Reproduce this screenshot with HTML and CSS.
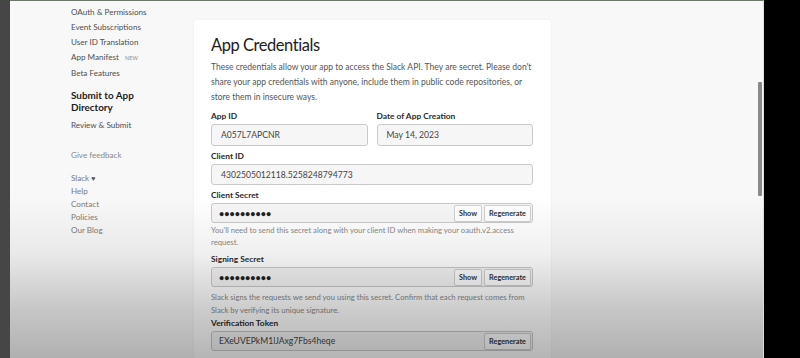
FILE: index.html
```html
<!DOCTYPE html>
<html>
<head>
<meta charset="utf-8">
<link rel="stylesheet" href="styles.css">
</head>
<body>
<div class="frame">
  <div class="strip"></div>
  <div class="page">
    <nav class="sidebar">
      <a class="nav">OAuth &amp; Permissions</a>
      <a class="nav">Event Subscriptions</a>
      <a class="nav">User ID Translation</a>
      <a class="nav">App Manifest <span class="new">NEW</span></a>
      <a class="nav">Beta Features</a>
      <div class="section">Submit to App Directory</div>
      <a class="nav">Review &amp; Submit</a>
      <a class="feedback">Give feedback</a>
      <div class="footer">
        <a class="foot">Slack <span class="heart">&#9829;</span></a>
        <a class="foot">Help</a>
        <a class="foot">Contact</a>
        <a class="foot">Policies</a>
        <a class="foot">Our Blog</a>
      </div>
    </nav>
    <main class="card">
      <h1 class="title">App Credentials</h1>
      <p class="desc">These credentials allow your app to access the Slack API. They are secret. Please don't share your app credentials with anyone, include them in public code repositories, or store them in insecure ways.</p>
      <div class="row">
        <div class="field">
          <label class="label">App ID</label>
          <div class="input tall">A057L7APCNR</div>
        </div>
        <div class="field">
          <label class="label">Date of App Creation</label>
          <div class="input tall">May 14, 2023</div>
        </div>
      </div>
      <div class="field f-client">
        <label class="label">Client ID</label>
        <div class="input mid">4302505012118.5258248794773</div>
      </div>
      <div class="field f-secret">
        <label class="label">Client Secret</label>
        <div class="input secret"><span class="dots">&#8226;&#8226;&#8226;&#8226;&#8226;&#8226;&#8226;&#8226;&#8226;&#8226;</span><span class="btns"><button class="btn">Show</button><button class="btn">Regenerate</button></span></div>
      </div>
      <p class="help h1">You'll need to send this secret along with your client ID when making your oauth.v2.access request.</p>
      <div class="field f-signing">
        <label class="label">Signing Secret</label>
        <div class="input secret"><span class="dots">&#8226;&#8226;&#8226;&#8226;&#8226;&#8226;&#8226;&#8226;&#8226;&#8226;</span><span class="btns"><button class="btn">Show</button><button class="btn">Regenerate</button></span></div>
      </div>
      <p class="help h2">Slack signs the requests we send you using this secret. Confirm that each request comes from Slack by verifying its unique signature.</p>
      <div class="field f-token">
        <label class="label">Verification Token</label>
        <div class="input secret"><span>EXeUVEPkM1lJAxg7Fbs4heqe</span><span class="btns"><button class="btn">Regenerate</button></span></div>
      </div>
      <p class="help h3">This deprecated Verification Token can still be used to verify that requests come from Slack, but</p>
    </main>
    <div class="scrollbar"></div>
    <div class="shade"></div>
  </div>
  <div class="black"></div>
</div>
</body>
</html>
```

FILE: styles.css
```css
* { box-sizing: border-box; }
html, body { margin: 0; padding: 0; }
body {
  width: 800px;
  height: 358px;
  overflow: hidden;
  font-family: Lato, "Noto Sans", sans-serif;
  background: #000;
}
.frame {
  display: flex;
  width: 800px;
  height: 358px;
}
.strip {
  width: 10px;
  background: #464646;
  flex: none;
}
.page {
  position: relative;
  width: 754px;
  flex: none;
  background: #f8f8f8;
  border-top: 1px solid #6c786a;
  border-right: 1px solid #dcdcdc;
  display: flex;
  align-items: flex-start;
  padding-left: 61px;
  overflow: hidden;
}
.black {
  flex: 1;
  background: #000;
}
.sidebar {
  width: 123px;
  flex: none;
  display: flex;
  flex-direction: column;
  padding-top: 4px;
}
.nav {
  font-size: 8.1px;
  line-height: 15px;
  color: #4f4f4f;
}
.new {
  font-size: 5.3px;
  color: #888;
  margin-left: 4px;
  letter-spacing: 0.2px;
}
.section {
  font-size: 9.9px;
  font-weight: 700;
  color: #1d1c1d;
  line-height: 12px;
  margin-top: 8px;
  margin-bottom: 5px;
  width: 80px;
}
.feedback {
  font-size: 8.1px;
  line-height: 15px;
  color: #8a8a8a;
  margin-top: 15px;
}
.footer {
  display: flex;
  flex-direction: column;
  margin-top: 9px;
}
.foot {
  font-size: 8.1px;
  line-height: 13px;
  color: #7a7a7a;
}
.heart { font-size: 7px; color: #555; }
.card {
  width: 357px;
  flex: none;
  margin-top: 19px;
  background: #fff;
  box-shadow: 0 0 2px rgba(0,0,0,0.08);
  border-radius: 3px;
  padding: 14px 18px 20px 17px;
  min-height: 400px;
}
.title {
  margin: 0;
  font-size: 16.5px;
  letter-spacing: -0.45px;
  line-height: 22px;
  font-weight: 400;
  color: #1d1c1d;
}
.desc {
  margin: 4px -3px 0 0;
  font-size: 8.55px;
  line-height: 15px;
  color: #555;
}
.row {
  display: flex;
  gap: 9px;
  margin-top: 5px;
}
.row .field { flex: 1; margin-top: 0; }
.field {
  display: flex;
  flex-direction: column;
}
.label {
  display: block;
  height: 12px;
  font-size: 8.4px;
  font-weight: 700;
  color: #2a2a2a;
  line-height: 12px;
  margin-bottom: 2px;
}
.input {
  height: 20px;
  border: 1px solid #c9c9c9;
  border-radius: 3px;
  background: #f6f6f6;
  font-size: 8.6px;
  color: #444;
  padding: 0 1px 0 7px;
  display: flex;
  align-items: center;
  justify-content: space-between;
}
.input.tall { height: 22px; padding-left: 9px; }
.input.mid { height: 21px; padding-left: 9px; }
.f-client { margin-top: 4px; }
.f-secret { margin-top: 4px; }
.dots { font-size: 9px; font-weight: 700; letter-spacing: 0; color: #222; }
.btns { display: flex; gap: 2px; }
.btn {
  font-family: Lato, "Noto Sans", sans-serif;
  font-size: 7.3px;
  font-weight: 700;
  color: #333;
  background: #fff;
  border: 1px solid #d0d0d0;
  border-radius: 2px;
  height: 17px;
  padding: 0 4px;
  margin: 0;
}
.help {
  margin: 1px 0 0;
  font-size: 7.7px;
  line-height: 12px;
  color: #888;
}
.f-signing { margin-top: 5px; }
.h2 { margin-top: 4px; line-height: 12.5px; }
.f-token { margin-top: 1px; }
.h3 { margin-top: 4px; }
.scrollbar {
  position: absolute;
  left: 748px;
  top: 81px;
  width: 4px;
  height: 114px;
  background: #8a8a8a;
  border-radius: 1px;
}
.shade {
  position: absolute;
  left: 0;
  right: 0;
  top: 195px;
  bottom: 0;
  background: linear-gradient(to bottom, rgba(0,0,0,0) 0%, rgba(0,0,0,0.06) 35%, rgba(0,0,0,0.2) 70%, rgba(0,0,0,0.29) 100%);
  pointer-events: none;
}
```
